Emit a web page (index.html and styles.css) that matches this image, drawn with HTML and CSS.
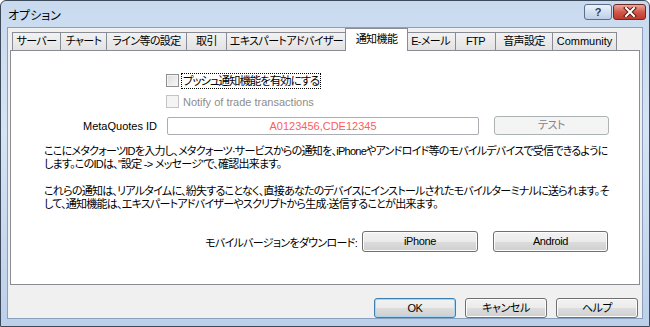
FILE: index.html
```html
<!DOCTYPE html>
<html lang="ja">
<head>
	<meta charset="UTF-8">
	<title>オプション</title>
	<link rel="stylesheet" href="styles.css">
</head>
<body>
	<div class="window">
		<div class="titlebar">
			<span class="title">オプション</span>
			<div class="caption-btns">
				<span class="cbtn help">?</span>
				<span class="cbtn close">
					<svg width="14" height="10" viewBox="0 0 14 10">
						<path d="M3 1 L11 9 M11 1 L3 9" stroke="#5a1a14" stroke-width="4" stroke-linecap="square"/>
						<path d="M3 1 L11 9 M11 1 L3 9" stroke="#fff" stroke-width="2" stroke-linecap="square"/>
					</svg>
				</span>
			</div>
		</div>
		<div class="client">
			<ul class="tabs">
				<li class="t1">サーバー</li>
				<li class="t2">チャート</li>
				<li class="t3">ライン等の設定</li>
				<li class="t4">取引</li>
				<li class="t5">エキスパートアドバイザー</li>
				<li class="t6 active">通知機能</li>
				<li class="t7">E-メール</li>
				<li class="t8">FTP</li>
				<li class="t9">音声設定</li>
				<li class="t10">Community</li>
			</ul>
			<div class="panel">
				<div class="checks">
					<div class="check"><span class="box"></span><span class="lbl jp focus">プッシュ通知機能を有効にする</span></div>
					<div class="check disabled"><span class="box"></span><span class="lbl">Notify of trade transactions</span></div>
				</div>
				<div class="id-row">
					<span class="id-label">MetaQuotes ID</span>
					<div class="input">A0123456,CDE12345</div>
					<div class="btn disabled">テスト</div>
				</div>
				<p class="note">ここにメタクォーツIDを入力し、メタクォーツ·サービスからの通知を、iPhoneやアンドロイド等のモバイルデバイスで受信できるように<br>します。このIDは、"設定 -&gt; メッセージ"で、確認出来ます。</p>
				<p class="note note2">これらの通知は、リアルタイムに、紛失することなく、直接あなたのデバイスにインストールされたモバイルターミナルに送られます。そ<br>して、通知機能は、エキスパートアドバイザーやスクリプトから生成·送信することが出来ます。</p>
				<div class="dl-row">
					<span class="dl-label">モバイルバージョンをダウンロード:</span>
					<div class="btn iphone">iPhone</div>
					<div class="btn android">Android</div>
				</div>
			</div>
			<div class="footer">
				<div class="btn default">OK</div>
				<div class="btn">キャンセル</div>
				<div class="btn">ヘルプ</div>
			</div>
		</div>
	</div>
</body>
</html>
```

FILE: styles.css
```css
* {
	margin: 0;
	padding: 0;
	box-sizing: border-box;
}
body {
	background: #fff;
	font-family: "Liberation Sans", "Noto Sans CJK JP", sans-serif;
	font-size: 11px;
	font-feature-settings: "palt";
	color: #000;
}
.window {
	width: 650px;
	height: 327px;
	border: 1px solid #3c4a5c;
	border-radius: 6px 6px 0 0;
	background: linear-gradient(#c9daef, #d6e3f4 40%, #bcd0ea);
	padding: 0 6px 7px 6px;
	display: flex;
	flex-direction: column;
}
.titlebar {
	height: 26px;
	display: flex;
	align-items: flex-start;
	justify-content: space-between;
}
.title {
	font-size: 12px;
	margin: 5px 0 0 1px;
}
.caption-btns {
	display: flex;
	gap: 1px;
	margin-top: 3px;
	margin-right: -3px;
}
.cbtn {
	height: 16px;
	border: 1px solid #5c6f88;
	border-radius: 3px;
	display: flex;
	align-items: center;
	justify-content: center;
}
.help {
	width: 28px;
	background: linear-gradient(#eef3fa, #d3e0f1 50%, #bccfe8);
	font-weight: bold;
	font-size: 11px;
	color: #2a3c58;
}
.close {
	width: 33px;
	background: linear-gradient(#e9a99c, #d2584a 50%, #c0392b);
	border-color: #6c2a22;
}
.client {
	flex: 1;
	background: #f0f0f0;
	border: 1px solid #8aa0bc;
	padding: 0 1px 0 2px;
	display: flex;
	flex-direction: column;
}
.tabs {
	list-style: none;
	display: flex;
	height: 22px;
	align-items: flex-end;
	padding-left: 2px;
	position: relative;
	z-index: 1;
}
.tabs li {
	height: 18px;
	border: 1px solid #898c95;
	border-bottom: none;
	border-left: none;
	background: linear-gradient(#f2f2f2, #e3e3e3);
	text-align: center;
	line-height: 17px;
	white-space: nowrap;
	letter-spacing: -0.6px;
}
.tabs li.t1 {
	border-left: 1px solid #898c95;
}
.tabs li.t10 {
	letter-spacing: 0;
}
.tabs li.active {
	height: 23px;
	margin: 0 -2px -1px -2px;
	background: #fff;
	border-left: 1px solid #898c95;
	position: relative;
	line-height: 20px;
	padding-bottom: 2px;
}
.t1 { width: 49px; }
.t2 { width: 46px; }
.t3 { width: 80px; }
.t4 { width: 40px; }
.t5 { width: 120px; }
.t6 { width: 63px; }
.t7 { width: 50px; }
.t8 { width: 40px; }
.t9 { width: 57px; }
.t10 { width: 64px; }
.panel {
	height: 235px;
	background: #fff;
	border: 1px solid #898c95;
	margin-right: 1px;
	padding-top: 19px;
}
.checks {
	padding-left: 155px;
}
.check {
	height: 21px;
	display: flex;
	align-items: center;
	gap: 2px;
}
.box {
	width: 13px;
	height: 13px;
	border: 1px solid #8e8f8f;
	background: linear-gradient(135deg, #dcdcdc, #f8f8f8);
	box-shadow: inset 0 0 0 1px #f4f4f4;
}
.lbl {
	padding: 0 1px;
	font-size: 11px;
	line-height: 14px;
	border: 1px solid transparent;
}
.lbl.jp {
	font-size: 11.5px;
	letter-spacing: -1.1px;
}
.lbl.focus {
	border: 1px dotted #000;
}
.check.disabled .box {
	border-color: #c4c4c4;
	background: #f4f4f4;
}
.check.disabled .lbl {
	color: #8d8d8d;
}
.id-row {
	margin-top: 4px;
	display: grid;
	grid-template-columns: 141px 312px 115px;
	column-gap: 15px;
	align-items: center;
}
.id-label {
	text-align: right;
	margin-right: -5px;
	font-size: 11px;
}
.input {
	height: 18px;
	border: 1px solid #abadb3;
	border-radius: 2px;
	text-align: center;
	line-height: 16px;
	color: #ff5c5c;
	font-size: 11px;
}
.btn {
	height: 21px;
	border: 1px solid #707070;
	border-radius: 3px;
	background: linear-gradient(#f2f2f2 0%, #ebebeb 50%, #dddddd 51%, #cfcfcf 100%);
	box-shadow: inset 0 0 0 1px #fcfcfc;
	text-align: center;
	line-height: 19px;
	font-size: 11px;
	letter-spacing: -0.4px;
}
.btn.disabled {
	height: 19px;
	line-height: 17px;
	border-color: #adb2b5;
	background: #f4f4f4;
	color: #838383;
	box-shadow: none;
}
.note {
	margin-top: 10px;
	padding-left: 33px;
	line-height: 13px;
	white-space: nowrap;
	letter-spacing: -0.75px;
}
.note2 {
	margin-top: 14px;
}
.dl-row {
	margin-top: 20px;
	display: flex;
	align-items: center;
}
.dl-label {
	width: 346px;
	text-align: right;
	letter-spacing: -0.7px;
}
.iphone {
	width: 116px;
	margin-left: 5px;
}
.android {
	width: 115px;
	margin-left: 15px;
}
.footer {
	flex: 1;
	display: flex;
	justify-content: flex-end;
	align-items: flex-start;
	gap: 9px;
	padding: 13px 3px 0 0;
}
.footer .btn {
	width: 82px;
	height: 20px;
	line-height: 18px;
}
.btn.default {
	border-color: #3c7fb1;
	box-shadow: inset 0 0 0 1px #a6d6f3;
}
```
